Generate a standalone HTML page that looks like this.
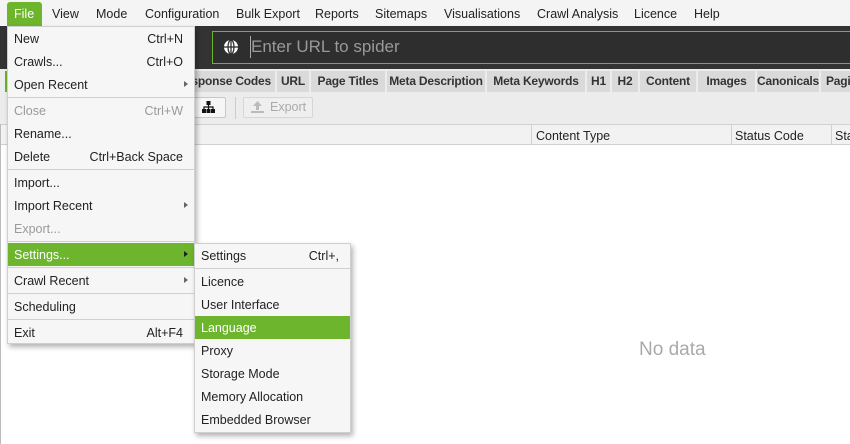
<!DOCTYPE html>
<html><head><style>
*{margin:0;padding:0;box-sizing:border-box}
body{width:850px;height:444px;overflow:hidden;background:#fff;font-family:"Liberation Sans",sans-serif;font-size:12.5px;color:#222;position:relative}
.a{position:absolute}
.mb span{position:absolute;top:7px}
.tab{position:absolute;top:71px;height:21px;background:#dadada;font-weight:bold;font-size:12px;line-height:21px;text-align:center;color:#333;white-space:nowrap;overflow:hidden;letter-spacing:-0.2px}
.mi{position:absolute;left:0;right:0;height:23px;line-height:24px;padding-left:6px}
.mi .k{position:absolute;right:11px;top:0}
.dis{color:#9a9a9a}
.sep{position:absolute;left:0;right:0;height:1px;background:#d0d0d0}
.arr{position:absolute;right:6px;top:8px;width:0;height:0;border-left:4px solid #666;border-top:3.5px solid transparent;border-bottom:3.5px solid transparent}
.hl{background:#6cb52d;color:#fff}
.hl .arr{border-left-color:#222}
</style></head><body>
<div class="a" style="left:0;top:0;width:850px;height:26px;background:#f4f4f4"></div>
<div class="a" style="left:7px;top:2px;width:35px;height:24px;background:#6cb52d;border-radius:3px 3px 0 0"></div>
<div class="mb">
<span style="left:14px;color:#fff">File</span>
<span style="left:52px">View</span>
<span style="left:96px">Mode</span>
<span style="left:145px">Configuration</span>
<span style="left:236px">Bulk Export</span>
<span style="left:315px">Reports</span>
<span style="left:375px">Sitemaps</span>
<span style="left:444px">Visualisations</span>
<span style="left:537px">Crawl Analysis</span>
<span style="left:634px">Licence</span>
<span style="left:694px">Help</span>
</div>
<div class="a" style="left:0;top:26px;width:850px;height:43px;background:#333"></div>
<div class="a" style="left:212px;top:31px;width:640px;height:33px;border:1px solid #6cb52d;background:#2e2e2e"></div>
<svg class="a" style="left:223px;top:39px" width="16" height="16" viewBox="0 0 16 16"><circle cx="8" cy="8" r="7" fill="#fff"/><g stroke="#2e2e2e" stroke-width="1.3" fill="none"><ellipse cx="8" cy="8" rx="3" ry="7"/><line x1="1" y1="8" x2="15" y2="8"/><line x1="8" y1="1" x2="8" y2="15"/></g></svg>
<div class="a" style="left:250px;top:36px;width:1px;height:22px;background:#aaa"></div>
<div class="a" style="left:251px;top:37px;font-size:17px;color:#999">Enter URL to spider</div>
<div class="a" style="left:0;top:69px;width:850px;height:55px;background:#ececec"></div>
<div class="a" style="left:5px;top:71px;width:3px;height:21px;background:#6cb52d"></div>
<div class="tab" style="left:190px;width:85px;text-align:right;padding-right:4px">sponse Codes</div>
<div class="tab" style="left:277px;width:32px">URL</div>
<div class="tab" style="left:311px;width:74px">Page Titles</div>
<div class="tab" style="left:387px;width:98px">Meta Description</div>
<div class="tab" style="left:487px;width:98px">Meta Keywords</div>
<div class="tab" style="left:587px;width:23px">H1</div>
<div class="tab" style="left:612px;width:26px">H2</div>
<div class="tab" style="left:640px;width:56px">Content</div>
<div class="tab" style="left:698px;width:57px">Images</div>
<div class="tab" style="left:757px;width:62px">Canonicals</div>
<div class="tab" style="left:821px;width:40px;text-align:left;padding-left:5px">Pagi</div>
<div class="a" style="left:190px;top:97px;width:36px;height:21px;border:1px solid #c8c8c8;background:#f6f6f6;border-radius:2px"></div>
<svg class="a" style="left:202px;top:101px" width="13" height="12" viewBox="0 0 13 12"><rect x="4.5" y="0" width="4" height="4" fill="#111"/><rect x="0" y="8" width="4" height="4" fill="#111"/><rect x="4.5" y="8" width="4" height="4" fill="#111"/><rect x="9" y="8" width="4" height="4" fill="#111"/><path d="M2 8V6h9v2M6.5 4v4" stroke="#111" stroke-width="1.2" fill="none"/></svg>
<div class="a" style="left:235px;top:97px;width:1px;height:22px;background:#ccc"></div>
<div class="a" style="left:243px;top:97px;width:70px;height:21px;border:1px solid #d6d6d6;background:#efefef;border-radius:2px;color:#aaa;line-height:19px;padding-left:26px">Export</div>
<svg class="a" style="left:251px;top:101px" width="13" height="12" viewBox="0 0 13 12"><path d="M6.5 0L2 5h3v4h3V5h3z" fill="#bbb"/><rect x="0" y="10" width="13" height="2" fill="#bbb"/></svg>
<div class="a" style="left:0;top:124px;width:850px;height:21px;background:#f2f2f2;border-top:1px solid #d0d0d0;border-bottom:1px solid #d0d0d0"></div>
<div class="a" style="left:531px;top:125px;width:1px;height:20px;background:#d0d0d0"></div>
<div class="a" style="left:731px;top:125px;width:1px;height:20px;background:#d0d0d0"></div>
<div class="a" style="left:831px;top:125px;width:1px;height:20px;background:#d0d0d0"></div>
<div class="a" style="left:536px;top:129px">Content Type</div>
<div class="a" style="left:735px;top:129px">Status Code</div>
<div class="a" style="left:835px;top:129px">Sta</div>
<div class="a" style="left:0;top:124px;width:1px;height:320px;background:#bbb"></div>
<div class="a" style="left:639px;top:339px;font-size:19px;color:#aaa">No data</div>

<div class="a" style="left:7px;top:26px;width:188px;height:318px;background:#f6f6f6;border:1px solid #cfcfcf;box-shadow:2px 3px 5px rgba(0,0,0,.3)">
<div class="mi" style="top:0">New<span class="k">Ctrl+N</span></div>
<div class="mi" style="top:23px">Crawls...<span class="k">Ctrl+O</span></div>
<div class="mi" style="top:46px">Open Recent<span class="arr"></span></div>
<div class="sep" style="top:70px"></div>
<div class="mi dis" style="top:72px">Close<span class="k">Ctrl+W</span></div>
<div class="mi" style="top:95px">Rename...</div>
<div class="mi" style="top:118px">Delete<span class="k">Ctrl+Back Space</span></div>
<div class="sep" style="top:142px"></div>
<div class="mi" style="top:144px">Import...</div>
<div class="mi" style="top:167px">Import Recent<span class="arr"></span></div>
<div class="mi dis" style="top:190px">Export...</div>
<div class="sep" style="top:214px"></div>
<div class="mi hl" style="top:216px">Settings...<span class="arr"></span></div>
<div class="sep" style="top:240px"></div>
<div class="mi" style="top:242px">Crawl Recent<span class="arr"></span></div>
<div class="sep" style="top:266px"></div>
<div class="mi" style="top:268px">Scheduling</div>
<div class="sep" style="top:292px"></div>
<div class="mi" style="top:294px">Exit<span class="k">Alt+F4</span></div>
</div>

<div class="a" style="left:194px;top:243px;width:157px;height:190px;background:#f6f6f6;border:1px solid #cfcfcf;box-shadow:2px 3px 5px rgba(0,0,0,.3)">
<div class="mi" style="top:0">Settings<span class="k">Ctrl+,</span></div>
<div class="sep" style="top:24px"></div>
<div class="mi" style="top:26px">Licence</div>
<div class="mi" style="top:49px">User Interface</div>
<div class="mi hl" style="top:72px">Language</div>
<div class="mi" style="top:95px">Proxy</div>
<div class="mi" style="top:118px">Storage Mode</div>
<div class="mi" style="top:141px">Memory Allocation</div>
<div class="mi" style="top:164px">Embedded Browser</div>
</div>
</body></html>
